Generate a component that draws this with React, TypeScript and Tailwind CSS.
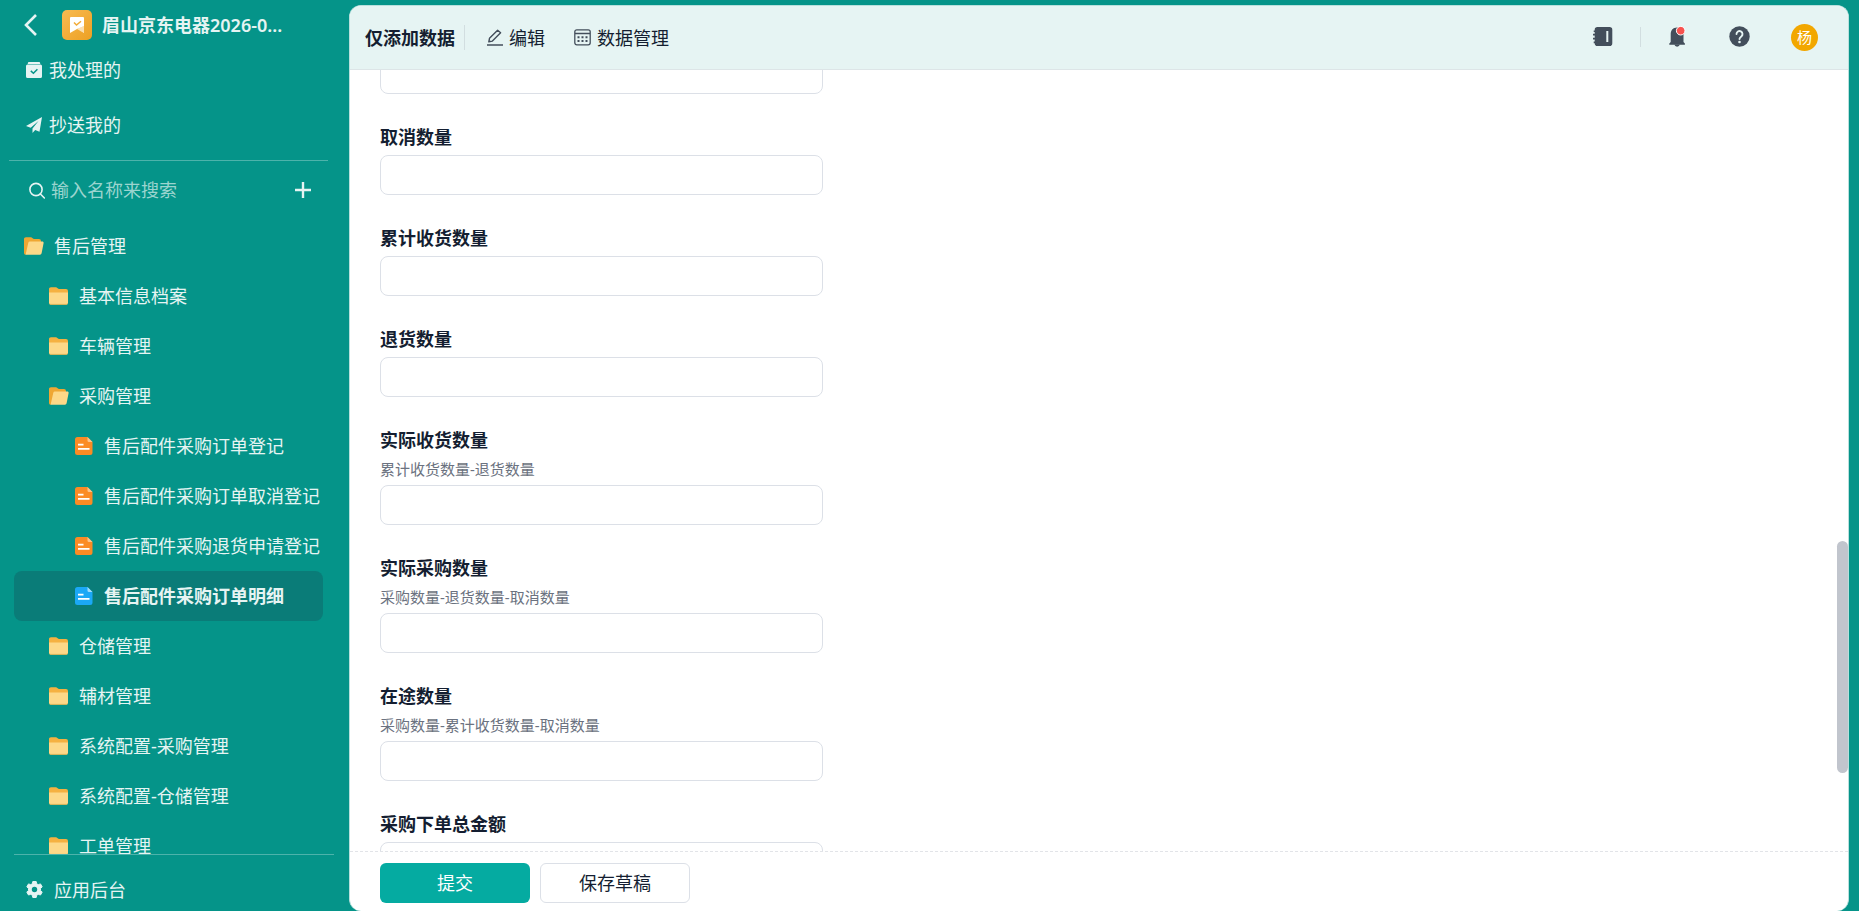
import type { ReactNode } from 'react'

type NodeIcon = 'folder' | 'folder-open' | 'form' | 'form-active'

interface TreeNode {
  name: string
  level: 0 | 1 | 2
  icon: NodeIcon
}

interface Field {
  id: string
  label: string
  hint?: string
}

const TREE: TreeNode[] = [
  { name: '售后管理', level: 0, icon: 'folder-open' },
  { name: '基本信息档案', level: 1, icon: 'folder' },
  { name: '车辆管理', level: 1, icon: 'folder' },
  { name: '采购管理', level: 1, icon: 'folder-open' },
  { name: '售后配件采购订单登记', level: 2, icon: 'form' },
  { name: '售后配件采购订单取消登记', level: 2, icon: 'form' },
  { name: '售后配件采购退货申请登记', level: 2, icon: 'form' },
  { name: '售后配件采购订单明细', level: 2, icon: 'form-active' },
  { name: '仓储管理', level: 1, icon: 'folder' },
  { name: '辅材管理', level: 1, icon: 'folder' },
  { name: '系统配置-采购管理', level: 1, icon: 'folder' },
  { name: '系统配置-仓储管理', level: 1, icon: 'folder' },
  { name: '工单管理', level: 1, icon: 'folder' },
]

const FIELDS: Field[] = [
  { id: 'cancel', label: '取消数量' },
  { id: 'received', label: '累计收货数量' },
  { id: 'returned', label: '退货数量' },
  { id: 'actual-received', label: '实际收货数量', hint: '累计收货数量-退货数量' },
  { id: 'actual-purchase', label: '实际采购数量', hint: '采购数量-退货数量-取消数量' },
  { id: 'in-transit', label: '在途数量', hint: '采购数量-累计收货数量-取消数量' },
  { id: 'total', label: '采购下单总金额' },
]

const INDENT = { 0: 'pl-[10px]', 1: 'pl-[35px]', 2: 'pl-[60px]' }

export default function App() {
  return (
    <div className="flex h-screen overflow-hidden bg-[#059489] pr-[10px] font-['Noto_Sans','Noto_Sans_CJK_SC',sans-serif] text-lg text-[#141e31]">
      <Sidebar />
      <main className="relative mt-[5px] flex min-w-0 flex-1 flex-col overflow-hidden rounded-xl border border-[#b9e0dd] border-b-0 bg-white">
        <TopBar />
        <EntryForm />
        <div className="absolute right-0 top-[535px] h-[232px] w-[11px] rounded-full bg-[#c1c5cd]" />
      </main>
    </div>
  )
}

function Sidebar() {
  return (
    <aside className="flex w-[349px] shrink-0 flex-col text-[#e6f4f3]">
      <div className="flex h-[42px] shrink-0 items-center pl-6 pt-2">
        <button aria-label="返回" className="mr-[25px]">
          <svg width="13" height="22" viewBox="0 0 13 22" fill="none" stroke="currentColor" strokeWidth="2.6">
            <path d="M12 1L2 11l10 10" />
          </svg>
        </button>
        <AppLogo />
        <h1 className="ml-[10px] text-lg font-semibold">眉山京东电器2026-0...</h1>
      </div>

      <nav className="shrink-0">
        <MenuItem label="我处理的" icon={<HandledIcon />} />
        <MenuItem label="抄送我的" icon={<SendIcon />} />
      </nav>

      <div className="ml-[9px] mr-[21px] mt-2 h-px shrink-0 bg-[#4db3ab]" />

      <div className="mb-[2px] flex h-[58px] shrink-0 items-center pl-[29px] pr-[38px]">
        <svg width="16" height="17" viewBox="0 0 16 17" fill="none" stroke="currentColor" strokeWidth="1.6">
          <circle cx="7" cy="7.5" r="6.1" />
          <path d="M11.4 12l4 4" strokeLinecap="round" />
        </svg>
        <input
          aria-label="搜索"
          placeholder="输入名称来搜索"
          className="ml-[6px] min-w-0 flex-1 bg-transparent outline-none placeholder:text-[#9bd4cf]"
        />
        <button aria-label="新建">
          <svg width="16" height="16" viewBox="0 0 16 16" stroke="currentColor" strokeWidth="2.4">
            <path d="M8 0v16M0 8h16" />
          </svg>
        </button>
      </div>

      <ul className="min-h-0 flex-1 overflow-hidden pl-[14px] pr-[26px]">
        {TREE.map(node => (
          <li key={node.name}>
            <button
              className={`flex h-[50px] w-full items-center gap-[10px] whitespace-nowrap rounded-lg ${INDENT[node.level]} ${
                node.icon === 'form-active' ? 'bg-[#0a7c78] font-bold' : ''
              }`}
            >
              <TreeIcon icon={node.icon} />
              {node.name}
            </button>
          </li>
        ))}
      </ul>

      <div className="ml-[14px] mr-[15px] flex h-[57px] shrink-0 items-center border-t border-[#4db3ab] pl-3 pt-[14px]">
        <button className="flex items-center gap-[11px]">
          <GearIcon />
          应用后台
        </button>
      </div>
    </aside>
  )
}

function MenuItem({ label, icon }: { label: string; icon: ReactNode }) {
  return (
    <a href="#" className="flex h-[55px] items-center gap-[7px] pl-[26px]">
      {icon}
      {label}
    </a>
  )
}

function TopBar() {
  return (
    <header className="flex h-16 shrink-0 items-center border-b border-[#dde5e7] bg-[#e6f4f3] pl-[15px] pr-[30px]">
      <h2 className="font-bold">仅添加数据</h2>
      <div className="ml-[9px] h-[25px] w-px bg-[#d2dee0]" />
      <button className="ml-[22px] flex items-center gap-[6px]">
        <svg width="16" height="17" viewBox="0 0 16 17" fill="none" stroke="#434e5b" strokeWidth="1.4" strokeLinejoin="round">
          <path d="M2.5 9.3L10.6 1.2l3 2.6-8.2 8.3-3.6.7z" />
          <path d="M0 16h16" />
        </svg>
        编辑
      </button>
      <button className="ml-[29px] flex items-center gap-[6px]">
        <GridIcon />
        数据管理
      </button>

      <div className="ml-auto flex items-center">
        <div className="flex items-center pb-[2px]">
          <button aria-label="通讯录">
            <svg width="20" height="20" viewBox="0 0 20 20" fill="#434e5b">
              <path d="M4.5 0h12a2.800 2.800 0 0 1 2.800 2.800v13.400a2.800 2.800 0 0 1-2.800 2.800h-12a2.800 2.800 0 0 1-2.800-2.800h-1v-1.600h1v-2H0v-1.800h1.700v-2.300H0V6.700h1.700V5h-1V3.400h1v-.6A2.800 2.800 0 0 1 4.500 0z" />
              <path d="M14.300 4v11" stroke="#e6f4f3" strokeWidth="2" />
            </svg>
          </button>
          <div className="ml-[27px] h-5 w-px bg-[#d2dee0]" />
          <button aria-label="消息" className="ml-[28px]">
            <svg width="18" height="22" viewBox="0 0 18 22" fill="#434e5b">
              <path d="M8 1.500c-3.800 0-6.300 2.800-6.300 6.500v8L.3 17.500v1.300h15.600v-1.300L14.500 16V8c0-3.700-2.700-6.500-6.500-6.500z" />
              <path d="M5.300 18.500a2.900 2.900 0 0 0 5.600 0z" />
              <circle cx="11.700" cy="4.700" r="4.300" fill="#f8524f" stroke="#fff" />
            </svg>
          </button>
          <button aria-label="帮助" className="ml-[42px]">
            <svg width="21" height="21" viewBox="0 0 21 21" fill="none">
              <circle cx="10.500" cy="10.500" r="10.200" fill="#434e5b" />
              <path d="M7.500 8a3 3 0 1 1 4.800 2.400c-1.100.8-1.800 1.300-1.800 2.600" stroke="#e6f4f3" strokeWidth="1.900" strokeLinecap="round" />
              <circle cx="10.500" cy="16" r="1.300" fill="#e6f4f3" />
            </svg>
          </button>
        </div>
        <button className="ml-[41px] flex size-[27px] items-center justify-center rounded-full bg-[#f2a700] text-[15px] text-white">
          杨
        </button>
      </div>
    </header>
  )
}

function EntryForm() {
  return (
    <form className="flex min-h-0 flex-1 flex-col" onSubmit={e => e.preventDefault()}>
      <div className="min-h-0 flex-1 overflow-hidden px-[30px]">
        <div className="-mt-4 w-[443px] max-w-full">
          {/* tail of the previous field, scrolled under the bar */}
          <input aria-label="采购数量" className="block h-10 w-full rounded-lg border border-[#dce0e7] px-3 outline-none" />
          {FIELDS.map(f => (
            <FormField key={f.id} field={f} />
          ))}
        </div>
      </div>
      <div className="flex h-[60px] shrink-0 gap-[10px] border-t border-dashed border-[#e2e4e8] px-[30px] pt-[11px]">
        <button type="submit" className="h-10 w-[150px] rounded-md bg-[#05aba1] text-white">
          提交
        </button>
        <button type="button" className="h-10 w-[150px] rounded-md border border-[#dce0e7] bg-white">
          保存草稿
        </button>
      </div>
    </form>
  )
}

function FormField({ field }: { field: Field }) {
  return (
    <div className="pt-[30px]">
      <label htmlFor={field.id} className="mb-[5px] block leading-[26px] font-bold">
        {field.label}
      </label>
      {field.hint && <p className="mb-[5px] text-[15px] leading-[22px] text-[#6b7280]">{field.hint}</p>}
      <input id={field.id} className="block h-10 w-full rounded-lg border border-[#dce0e7] px-3 outline-none" />
    </div>
  )
}

function TreeIcon({ icon }: { icon: NodeIcon }) {
  if (icon === 'folder') {
    return (
      <svg className="shrink-0" width="20" height="18" viewBox="0 0 20 18">
        <path d="M0 2.200C0 1 .8.300 2 .300h5.200l2.600 1.600H17a2 2 0 0 1 2 2V8H0z" fill="#f5b141" />
        <path d="M0 5.500h19V16a1.700 1.700 0 0 1-1.700 1.700H1.700A1.700 1.700 0 0 1 0 16z" fill="#fdd888" />
        <path d="M.5 16.500c.3.700.7.900 1.200.900h15.600c.5 0 1-.2 1.200-.9" fill="none" stroke="#dcae4e" strokeWidth=".8" />
      </svg>
    )
  }
  if (icon === 'folder-open') {
    return (
      <svg className="shrink-0" width="20" height="18" viewBox="0 0 20 18">
        <path d="M0 2.200C0 1 .8.300 2 .300h5.200l2.600 1.600H15a2 2 0 0 1 2 2V16H4l-2.500 1.700A1.700 1.700 0 0 1 0 16z" fill="#efa733" />
        <path d="M5.800 4.500h12.400c1 0 1.600.7 1.400 1.600l-2 10.200a1.700 1.700 0 0 1-1.700 1.400H1.600l2.700-12c.2-.8.700-1.200 1.500-1.200z" fill="#fdd888" />
      </svg>
    )
  }
  const fill = icon === 'form-active' ? '#1ba8f6' : '#fb8b24'
  const fold = icon === 'form-active' ? '#9fdcfc' : '#fdc48c'
  return (
    <svg className="ml-px shrink-0" width="19" height="18" viewBox="0 0 19 18">
      <path d="M2.500 0h10L17.500 5v10.500A2.500 2.500 0 0 1 15 18H2.500A2.500 2.500 0 0 1 0 15.500v-13A2.500 2.500 0 0 1 2.500 0z" fill={fill} />
      <path d="M12.500 0l5 5h-3.500A1.500 1.500 0 0 1 12.500 3.500z" fill={fold} />
      <path d="M3 7.700h5.500M3 11.800h11.500" stroke="#fff" strokeWidth="1.800" />
    </svg>
  )
}

function AppLogo() {
  return (
    <svg className="shrink-0" width="30" height="30" viewBox="0 0 30 30">
      <defs>
        <linearGradient id="logo-bg" x1="0" y1="0" x2="1" y2="1">
          <stop offset="0" stopColor="#f8bb52" />
          <stop offset="1" stopColor="#eda023" />
        </linearGradient>
      </defs>
      <rect width="30" height="30" rx="5" fill="url(#logo-bg)" />
      <path d="M15 18l7-3.500v8.500z" fill="#fbdfb0" />
      <path d="M9 7h12a1 1 0 0 1 1 1v8l-7 3-7 4V8a1 1 0 0 1 1-1z" fill="#fff" />
      <path d="M22 16v7l-7-4z" fill="#fbdfb0" />
      <path d="M12 12.500l2.500 2.500 4.500-3.800" fill="none" stroke="#f2ab36" strokeWidth="1.500" />
    </svg>
  )
}

function HandledIcon() {
  return (
    <svg width="16" height="16" viewBox="0 0 16 16" fill="currentColor">
      <path d="M3 0h10a1.200 1.200 0 0 1 1.200 1.200V2H1.800v-.8A1.200 1.200 0 0 1 3 0z" />
      <path d="M1.500 2.600h13A1.500 1.500 0 0 1 16 4.100v10.300a1.600 1.600 0 0 1-1.600 1.600H1.600A1.600 1.600 0 0 1 0 14.400V4.100A1.500 1.500 0 0 1 1.500 2.600z" />
      <path d="M4.800 8.900l2.600 2.300 4-4" fill="none" stroke="#059489" strokeWidth="1.500" />
    </svg>
  )
}

function SendIcon() {
  return (
    <svg width="16" height="16" viewBox="0 0 16 16" fill="currentColor">
      <path d="M16 0L0 9l4.700 1.800L12.500 4 6.500 11.500V16l2.700-2.900 4.300 1.700z" />
    </svg>
  )
}

function GridIcon() {
  return (
    <svg width="17" height="17" viewBox="0 0 17 17" fill="none" stroke="#434e5b" strokeWidth="1.300">
      <rect x=".8" y=".8" width="15.400" height="15" rx="2" />
      <path d="M1 4.500h15" />
      <path d="M3.500 8.200h2M7.500 8.200h2M11.500 8.200h2M3.500 12h2M7.500 12h2M11.500 12h2" strokeWidth="2" />
    </svg>
  )
}

function GearIcon() {
  return (
    <svg width="17" height="18" viewBox="0 0 17 18" fill="none">
      <path
        d="M6.800.5h3.400l.5 2.300 1.500.9 2.300-.8 1.700 3-1.700 1.600v1.900l1.700 1.700-1.700 2.900-2.300-.7-1.500.9-.5 2.300H6.800l-.5-2.300-1.500-.9-2.300.7-1.700-2.900 1.700-1.700V7.500L.8 5.900l1.700-3 2.300.8 1.500-.9z"
        fill="currentColor"
        stroke="currentColor"
        strokeLinejoin="round"
      />
      <circle cx="8.500" cy="8.500" r="2.700" fill="#059489" />
    </svg>
  )
}
